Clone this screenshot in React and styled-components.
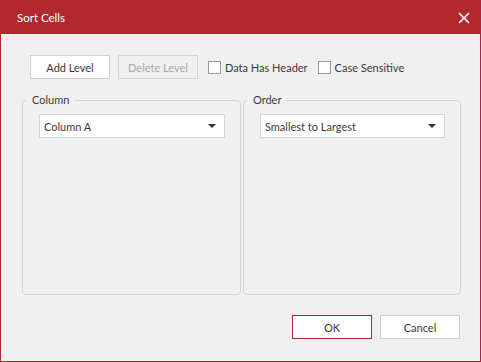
import React from "react";
import styled, { createGlobalStyle } from "styled-components";

const red = "#b3282e";

const GlobalStyle = createGlobalStyle`
    html, body {
        margin: 0;
        padding: 0;
        background: #f7f7f7;
    }
    body {
        font-family: Lato, "Liberation Sans", sans-serif;
        font-size: 11px;
        color: #3a3a3a;
    }
`;

const Dialog = styled.div`
    box-sizing: border-box;
    width: 481px;
    height: 362px;
    border: 1px solid ${red};
    background: #f0f0f0;
    display: flex;
    flex-direction: column;
`;

const TitleBar = styled.div`
    height: 33px;
    background: ${red};
    color: #fff;
    display: flex;
    align-items: center;
    justify-content: space-between;
    padding: 0 9px 0 16px;
    font-size: 11.5px;
`;

const CloseButton = styled.button`
    border: 0;
    background: none;
    padding: 0;
    width: 14px;
    height: 14px;
    display: flex;
    align-items: center;
    justify-content: center;
    cursor: pointer;
`;

const Toolbar = styled.div`
    display: flex;
    align-items: center;
    margin: 21px 0 0 29px;
`;

const Button = styled.button`
    box-sizing: border-box;
    width: 80px;
    height: 24px;
    margin-right: ${(p) => p.$gap || 0}px;
    font-family: inherit;
    font-size: 11px;
    color: ${(p) => (p.disabled ? "#a8a8a8" : "#3a3a3a")};
    background: ${(p) => (p.disabled ? "#f0f0f0" : "#fff")};
    border: 1px solid ${(p) => (p.$primary ? red : p.disabled ? "#d4d4d4" : "#d0d0d0")};
    padding: 0;
    cursor: ${(p) => (p.disabled ? "default" : "pointer")};
`;

const Check = styled.label`
    display: flex;
    align-items: center;
    gap: 4px;
    margin-right: 10px;
    cursor: pointer;
`;

const Box = styled.span`
    box-sizing: border-box;
    width: 13px;
    height: 13px;
    background: #fff;
    border: 1px solid #9a9a9a;
`;

const Groups = styled.div`
    display: flex;
    gap: 2px;
    margin: 14px 19px 0 21px;
`;

const Group = styled.fieldset`
    flex: ${(p) => p.$grow};
    margin: 0;
    height: 202px;
    box-sizing: border-box;
    border: 1px solid #d4d4d4;
    border-radius: 4px;
    padding: 0 15px 0 3px;
`;

const Legend = styled.legend`
    padding: 0 6px;
    line-height: 14px;
`;

const Select = styled.div`
    box-sizing: border-box;
    margin: 7px 0 0 13px;
    height: 24px;
    background: #fff;
    border: 1px solid #d6d6d6;
    display: flex;
    align-items: center;
    justify-content: space-between;
    padding: 0 8px 0 4px;
`;

const Footer = styled.div`
    display: flex;
    justify-content: flex-end;
    margin: 20px 20px 0 0;
`;

const Arrow = () => (
    <svg width="8" height="4" viewBox="0 0 8 4">
        <path d="M0 0h8L4 4z" fill="#333" />
    </svg>
);

const App = () => {
    return (
        <>
            <GlobalStyle />
            <Dialog>
                <TitleBar>
                    <span>Sort Cells</span>
                    <CloseButton aria-label="Close">
                        <svg width="12" height="12" viewBox="0 0 12 12">
                            <path
                                d="M1 1l10 10M11 1L1 11"
                                stroke="#fff"
                                strokeWidth="1.6"
                            />
                        </svg>
                    </CloseButton>
                </TitleBar>

                <Toolbar>
                    <Button $gap={8}>Add Level</Button>
                    <Button $gap={10} disabled>
                        Delete Level
                    </Button>
                    <Check>
                        <Box />
                        Data Has Header
                    </Check>
                    <Check>
                        <Box />
                        Case Sensitive
                    </Check>
                </Toolbar>

                <Groups>
                    <Group $grow={219}>
                        <Legend>Column</Legend>
                        <Select>
                            Column A
                            <Arrow />
                        </Select>
                    </Group>
                    <Group $grow={218}>
                        <Legend>Order</Legend>
                        <Select>
                            Smallest to Largest
                            <Arrow />
                        </Select>
                    </Group>
                </Groups>

                <Footer>
                    <Button $gap={8} $primary>
                        OK
                    </Button>
                    <Button>Cancel</Button>
                </Footer>
            </Dialog>
        </>
    );
};

export default App;
